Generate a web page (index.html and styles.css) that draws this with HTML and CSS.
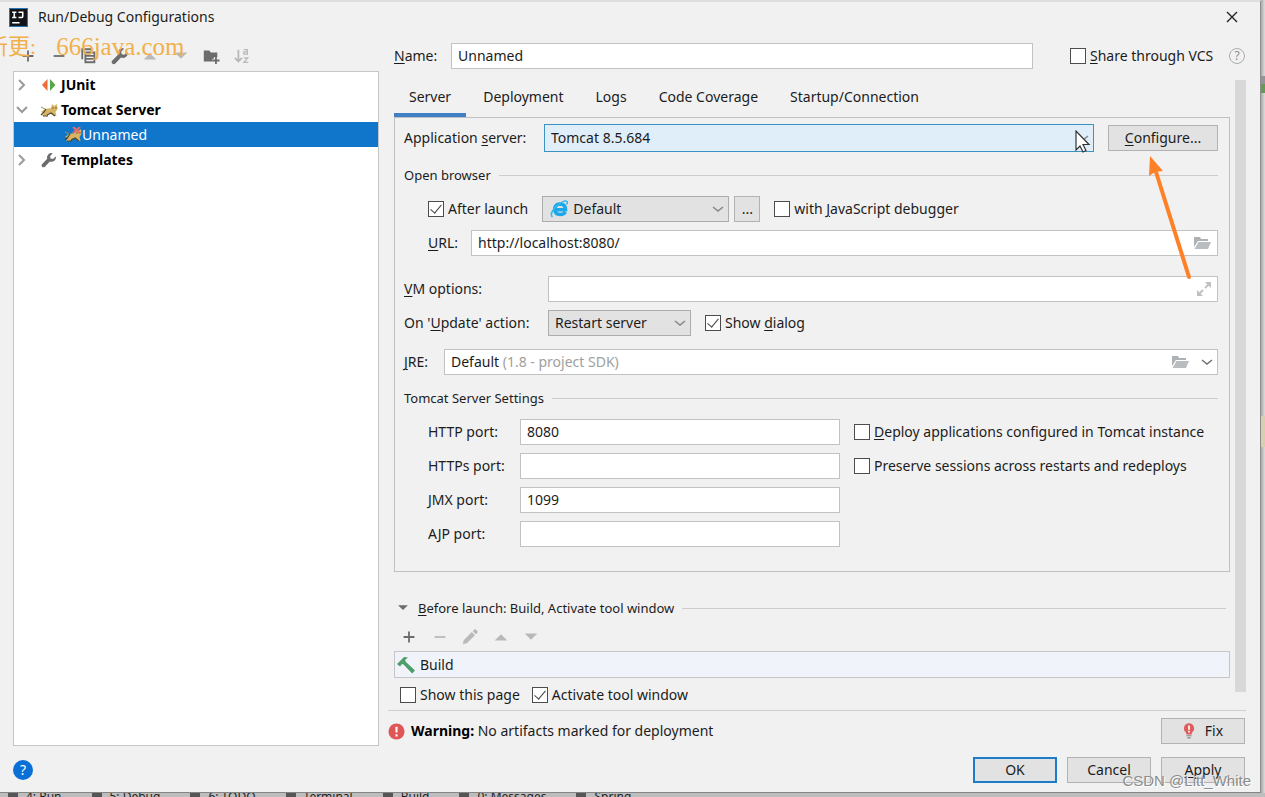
FILE: index.html
```html
<!DOCTYPE html>
<html lang="en">
<head>
<meta charset="utf-8">
<title>Run/Debug Configurations</title>
<link rel="stylesheet" href="styles.css">
</head>
<body>
<svg class="defs" aria-hidden="true">
  <symbol id="plus" viewBox="0 0 20 20"><path d="M10 4v12M4 10h12" stroke="currentColor" stroke-width="2" fill="none"/></symbol>
  <symbol id="minus" viewBox="0 0 20 20"><path d="M4 10h12" stroke="currentColor" stroke-width="2"/></symbol>
  <symbol id="up" viewBox="0 0 20 20"><path d="M3 14h14l-7-7z" fill="currentColor"/></symbol>
  <symbol id="down" viewBox="0 0 20 20"><path d="M3 6h14l-7 7z" fill="currentColor"/></symbol>
  <symbol id="wrench" viewBox="0 0 20 20"><path d="M18.500 5.500l-3.700 3.200-2.900-.6-.6-2.700 3.300-3.700a5.400 5.400 0 0 0-6.800 6.800L1.500 15a2 2 0 0 0 3.300 3.400l6.400-6.600A5.400 5.400 0 0 0 18.500 5.500z" fill="currentColor"/></symbol>
  <symbol id="right" viewBox="0 0 12 12"><path d="M3 1l5 5-5 5" stroke="currentColor" stroke-width="2" fill="none"/></symbol>
  <symbol id="chev" viewBox="0 0 12 12"><path d="M1 4l5 4 5-4" stroke="currentColor" stroke-width="1.500" fill="none"/></symbol>
  <symbol id="bigchev" viewBox="0 0 12 12"><path d="M1 3l5 5 5-5" stroke="currentColor" stroke-width="2" fill="none"/></symbol>
  <symbol id="open" viewBox="0 0 18 16"><path d="M1 2h6l1 2h7v2H5L1 12z" fill="#aeb2b5"/><path d="M5.500 7H18l-3 7H1.500z" fill="#b9bdc0"/></symbol>
  <symbol id="cat" viewBox="0 0 18 16"><path d="M1 10l4-3 6-1 1-4 2 2 3-2 .5 5-2 3 1 4h-2l-3-3-4 1-1 2H2l2-3z" fill="#d8b565"/><path d="M1 13l3-3 2-3M7 13l4-2 4 3M3 14h5" stroke="#54462b" stroke-width="1.200" fill="none"/><path d="M12.500 6h1M15.500 6h1" stroke="#222"/><path d="M1 5l4 2" stroke="#9b8d68"/></symbol>
</svg>

<div class="screen">
  <main class="dialog">
    <header class="titlebar">
      <svg class="logo" viewBox="0 0 18 18"><rect width="18" height="18" fill="#2875b8"/><rect x="1" y="1" width="16" height="16" fill="#111318"/><path d="M3 4h4M5 4v5M3 9h4M9 4h4v4q0 1-1.500 1H9M3 14h7" stroke="#fff" stroke-width="1.500" fill="none"/></svg>
      <h1>Run/Debug Configurations</h1>
      <button class="close" aria-label="Close"><svg viewBox="0 0 12 12"><path d="M1 1l10 10M11 1L1 11" stroke="#222" stroke-width="1.400"/></svg></button>
    </header>

    <div class="body">
      <aside class="side">
        <div class="tools">
          <button aria-label="Add"><svg><use href="#plus"/></svg></button>
          <button aria-label="Remove"><svg><use href="#minus"/></svg></button>
          <button aria-label="Copy"><svg viewBox="0 0 20 20"><path d="M2.500 13.500V2.500h11" stroke="currentColor" stroke-width="2" fill="none"/><rect x="5" y="5" width="12" height="13" fill="currentColor"/><path d="M7 8h8M7 11.500h8M7 15h8" stroke="#f1f1f1" stroke-width="1.500"/></svg></button>
          <button aria-label="Edit templates"><svg><use href="#wrench"/></svg></button>
          <button class="off" aria-label="Move up"><svg><use href="#up"/></svg></button>
          <button class="off" aria-label="Move down"><svg><use href="#down"/></svg></button>
          <button aria-label="New folder"><svg viewBox="0 0 20 20"><path d="M2 4h6l2 2h7v6h-4v4H2z" fill="currentColor"/><path d="M15.500 11v8M11.500 15h8" stroke="#f1f1f1" stroke-width="4"/><path d="M15.500 11v8M11.500 15h8" stroke="currentColor" stroke-width="2"/></svg></button>
          <button class="off" aria-label="Sort"><svg viewBox="0 0 20 20"><path d="M6 3v13M2 12l4 4 4-4" stroke="currentColor" stroke-width="2" fill="none"/><path d="M12 3h4v5h-4V5.500h4M12 12h4.500l-4.500 5h5" stroke="currentColor" stroke-width="1.400" fill="none"/></svg></button>
        </div>
        <ul class="tree">
          <li><svg class="twist"><use href="#right"/></svg><svg class="kind" viewBox="0 0 18 16"><path d="M7.500 2v12L2 8z" fill="#f26b32"/><path d="M10 2v12l5.500-6z" fill="#59a54b"/></svg>JUnit</li>
          <li><svg class="twist"><use href="#bigchev"/></svg><svg class="kind"><use href="#cat"/></svg>Tomcat Server</li>
          <li class="selected"><svg class="kind" viewBox="0 0 18 16"><use href="#cat" width="18" height="16"/><path d="M9 0l7 6M16 0l-7 6" stroke="#f06a62" stroke-width="2"/></svg>Unnamed</li>
          <li><svg class="twist"><use href="#right"/></svg><svg class="kind gray"><use href="#wrench"/></svg>Templates</li>
        </ul>
      </aside>

      <section class="main">
        <div class="namerow">
          <label for="name"><u>N</u>ame:</label>
          <input class="field" id="name" type="text" value="Unnamed">
          <label class="check"><input type="checkbox"><span><u>S</u>hare through VCS</span></label>
          <button class="hint" aria-label="Help on sharing">?</button>
        </div>

        <div class="scroller">
          <div class="content">
            <nav class="tabs">
              <button class="active">Server</button><button>Deployment</button><button>Logs</button><button>Code Coverage</button><button>Startup/Connection</button>
            </nav>
            <div class="panel">
              <div class="row server">
                <label for="server">Application <u>s</u>erver:</label>
                <span class="combo focus"><select id="server"><option>Tomcat 8.5.684</option></select><svg><use href="#chev"/></svg></span>
                <button class="btn configure"><span><u>C</u>onfigure...</span></button>
              </div>
              <h2 class="rule">Open browser</h2>
              <div class="row browser">
                <label class="check"><input type="checkbox" checked><span>After launch</span></label>
                <span class="combo grey ie"><svg class="ieicon" viewBox="0 0 18 18"><path d="M5 9.800H15.500Q15.500 4 10 4 4.800 4.300 4.800 9.500q.2 5 5.500 5 3.700 0 5-2.500" stroke="#1ba8ea" stroke-width="3.600" fill="none"/><path d="M2.500 17Q-1 14 6 6.500 14.500-.5 17 1.500q.7 1-.3 3" stroke="#38b6f0" stroke-width="1.600" fill="none"/></svg><select aria-label="Browser"><option>Default</option></select><svg><use href="#chev"/></svg></span>
                <button class="btn more">...</button>
                <label class="check js"><input type="checkbox"><span>with <u>J</u>avaScript debugger</span></label>
              </div>
              <div class="row url">
                <label for="url"><u>U</u>RL:</label>
                <span class="box"><input id="url" type="text" value="http://localhost:8080/"><svg class="folder"><use href="#open"/></svg></span>
              </div>
              <div class="row vm">
                <label for="vm"><u>V</u>M options:</label>
                <span class="box"><input id="vm" type="text"><svg class="expand" viewBox="0 0 16 16"><path d="M9 1h6v6zM1 9v6h6z" fill="#c0c0c0"/><path d="M9 7l4-4M7 9l-4 4" stroke="#c0c0c0" stroke-width="1.800"/></svg></span>
              </div>
              <div class="row update">
                <label for="update">On '<u>U</u>pdate' action:</label>
                <span class="combo grey"><select id="update"><option>Restart server</option></select><svg><use href="#chev"/></svg></span>
                <label class="check"><input type="checkbox" checked><span>Show <u>d</u>ialog</span></label>
              </div>
              <div class="row jre">
                <label for="jre"><u>J</u>RE:</label>
                <button class="box" id="jre" aria-haspopup="listbox"><span>Default <i>(1.8 - project SDK)</i></span><svg class="folder"><use href="#open"/></svg><svg class="chev"><use href="#chev"/></svg></button>
              </div>
              <h2 class="rule">Tomcat Server Settings</h2>
              <div class="ports">
                <label for="http">HTTP port:</label><input class="field" id="http" type="text" value="8080"><label class="check"><input type="checkbox"><span><u>D</u>eploy applications configured in Tomcat instance</span></label>
                <label for="https">HTTPs port:</label><input class="field" id="https" type="text"><label class="check"><input type="checkbox"><span>Preserve sessions across restarts and redeploys</span></label>
                <label for="jmx">JMX port:</label><input class="field" id="jmx" type="text" value="1099"><span></span>
                <label for="ajp">AJP port:</label><input class="field" id="ajp" type="text"><span></span>
              </div>
            </div>

            <h2 class="rule before"><svg class="fold"><use href="#down"/></svg><span><u>B</u>efore launch: Build, Activate tool window</span></h2>
            <div class="tools tasks">
              <button aria-label="Add task"><svg><use href="#plus"/></svg></button>
              <button class="off" aria-label="Remove task"><svg><use href="#minus"/></svg></button>
              <button class="off" aria-label="Edit task"><svg viewBox="0 0 20 20"><path d="M2 18l1-4.500L12 4.500l3.500 3.500-9 9zM13 3.500L15 1.500q1-.5 2 .5l1 1q1 1 .3 2L16.500 7z" fill="currentColor"/></svg></button>
              <button class="off" aria-label="Task up"><svg><use href="#up"/></svg></button>
              <button class="off" aria-label="Task down"><svg><use href="#down"/></svg></button>
            </div>
            <div class="tasklist"><svg viewBox="0 0 18 18"><path d="M0 8L7 1l4 .5-3 2.500 1 2 9 8.500-2.800 3L6.500 8.500 5 8 3 10.500z" fill="#4d9e68"/></svg>Build</div>
            <div class="row checks">
              <label class="check"><input type="checkbox"><span>Show this page</span></label>
              <label class="check"><input type="checkbox" checked><span>Activate tool window</span></label>
            </div>
          </div>
          <div class="thumb"></div>
        </div>

        <div class="warning">
          <svg viewBox="0 0 18 18"><circle cx="9" cy="9" r="8.500" fill="#e05555"/><path d="M9 4v6M9 12v2.200" stroke="#fff" stroke-width="2.200"/></svg>
          <p><b>Warning:</b> No artifacts marked for deployment</p>
          <button class="btn wide"><svg viewBox="0 0 14 18"><path d="M7 0a6 6 0 0 0-3.500 10.800L4 13h6l.5-2.200A6 6 0 0 0 7 0z" fill="#e05b5b"/><path d="M7 2.500v5M7 8.800v2" stroke="#fff" stroke-width="2"/><path d="M4 14.500h6M5 17h4" stroke="#888" stroke-width="1.300"/></svg>Fix</button>
        </div>
      </section>
    </div>

    <footer class="actions">
      <button class="help" aria-label="Help">?</button>
      <button class="btn wide ok">OK</button>
      <button class="btn wide">Cancel</button>
      <button class="btn wide"><span><u>A</u>pply</span></button>
    </footer>
  </main>

  <div class="edge"><i class="mark slate"></i><i class="mark green"></i><i class="mark sand"></i></div>
  <div class="dock">
    <span><i></i>4: Run</span><span><i></i>5: Debug</span><span><i></i>6: TODO</span><span><i></i>Terminal</span><span><i></i>Build</span><span><i></i>0: Messages</span><span><i></i>Spring</span>
  </div>

  <div class="stamp"><span class="cjk">新更:</span><span>666java.com</span></div>
  <div class="credit">CSDN @Litt_White</div>
  <svg class="arrow" viewBox="0 0 50 130"><path d="M44 122L11 17" stroke="#ff8127" stroke-width="4" stroke-linecap="round"/><path d="M5 1L18 16l-8 1-6 4z" fill="#ff8127"/></svg>
  <svg class="cursor" viewBox="0 0 16 24"><path d="M1 1v19l4-4 3 6 3-1.500-3-6h6z" fill="#fff" stroke="#333" stroke-width="1.200"/></svg>
</div>
</body>
</html>
```
FILE: styles.css
```css
* { box-sizing: border-box; }
body, h1, h2, p, ul { margin: 0; padding: 0; }
body { font: 14px/20px "Noto Sans", "Open Sans", sans-serif; color: #1c1c1c; background: #f1f1f1; }
button, input, select { font: inherit; color: inherit; margin: 0; }
button { padding: 0; border: 0; background: none; }
i { font-style: normal; }
u { text-underline-offset: 2px; }
svg { flex: none; display: block; }
.defs { position: absolute; width: 0; height: 0; }

.screen { position: relative; display: grid; grid-template-columns: minmax(0, 1fr) 4px; grid-template-rows: 1fr 4px; min-height: 100vh; overflow: hidden; }
.dialog { display: flex; flex-direction: column; background: #f1f1f1; border-top: 2px solid #dedede; border-right: 1px solid #8c8c8c; border-bottom: 1px solid #858585; }

.titlebar { display: flex; align-items: center; gap: 10px; height: 32px; padding: 0 22px 2px 9px; }
.logo { width: 19px; height: 19px; }
h1 { flex: 1; font-size: 14px; font-weight: 400; }
.close svg { width: 12px; height: 12px; }

.body { flex: 1; display: flex; gap: 9px; padding: 0 14px 0 13px; }
.side { flex: 0 0 366px; display: flex; flex-direction: column; margin-bottom: 6px; }
.tools { display: flex; justify-content: space-between; align-items: center; color: #6c6c6c; }
.tools svg { width: 18px; height: 18px; }
.tools .off { color: #b9b9b9; }
.side .tools { width: 238px; height: 37px; padding: 6px 0 0 6px; }
.tree { flex: 1; list-style: none; background: #fff; border: 1px solid #c6c6c6; font-weight: 700; color: #000; }
.tree li { display: flex; align-items: center; height: 25px; padding-left: 2px; }
.twist { width: 12px; height: 12px; margin-right: 12px; color: #9a9a9a; }
.kind { width: 18px; height: 16px; margin-right: 3px; }
.gray { color: #6c6c6c; }
.tree .selected { padding-left: 50px; background: #0f76cb; color: #fff; font-weight: 400; }
.selected .kind { margin-right: 0; }

.main { flex: 1; min-width: 0; display: flex; flex-direction: column; }
.field, .box { height: 26px; border: 1px solid #c2c2c2; background: #fff; border-radius: 0; min-width: 0; }
.field { padding: 0 6px 2px; }
.namerow { display: flex; align-items: center; height: 46px; padding: 0 1px 2px 6px; }
.namerow > label:first-child { width: 45px; }
.namerow .field { flex: 1; margin: 0 37px 0 12px; }
.check { display: flex; align-items: center; gap: 4px; white-space: nowrap; }
.check input { appearance: none; position: relative; width: 16px; height: 16px; border: 1px solid #4c4c4c; background: #fff; }
.check input:checked::after { content: ""; position: absolute; left: 4px; top: 0; width: 5px; height: 10px; border: solid #444; border-width: 0 1px 1px 0; transform: rotate(40deg); }
.namerow .check { width: 150px; }
.hint { width: 16px; height: 16px; margin-left: 9px; border: 1px solid #a9adb2; border-radius: 50%; color: #8a8e93; font-size: 12px; line-height: 14px; }

.scroller { display: flex; justify-content: space-between; border-bottom: 1px solid #cfcfcf; padding-bottom: 18px; }
.content { flex: 1; min-width: 0; padding: 0 5px 0 6px; margin-bottom: -20px; }
.thumb { width: 11px; background: #d8d8d8; }
.tabs { display: flex; height: 37px; gap: 2px; }
.tabs button { padding: 0 15px; border-bottom: 4px solid transparent; }
.tabs .active { border-color: #417fc4; }
.panel { border: 1px solid #c0c0c0; padding: 6px 11px 24px 9px; }
.row { display: flex; align-items: center; }
.row > label { white-space: nowrap; }
.rule { display: flex; align-items: center; gap: 8px; font-size: 13px; font-weight: 400; height: 20px; }
.rule::after { content: ""; flex: 1; height: 1px; background: #cdcdcd; }

.combo { position: relative; display: flex; align-items: center; height: 26px; border: 1px solid #adadad; }
.combo select { appearance: none; flex: 1; min-width: 0; height: 100%; border: 0; border-radius: 0; background: none; padding: 0 6px; }
.combo svg { width: 12px; height: 12px; margin-right: 4px; color: #858585; }
.grey { background: #e2e2e2; }
.focus { height: 28px; border: 1px solid #3f92c4; background: #dfeef9; }
.server { gap: 12px; }
.server label { flex: none; width: 128px; }
.update > label:first-child, .vm label { flex: none; width: 144px; }
.server .combo { flex: 1; }
.btn { display: flex; align-items: center; justify-content: center; height: 26px; border: 1px solid #b2b2b2; background: #e2e2e2; }
.configure { width: 110px; margin-left: 2px; }
.panel .rule { margin: 13px 0 11px; }
.browser { padding-left: 24px; }
.browser .combo { width: 187px; margin: 0 5px 0 14px; }
.combo .ieicon { width: 18px; height: 18px; margin: 0 0 0 7px; }
.ie select { padding-left: 5px; }
.more { width: 26px; }
.js { margin-left: 14px; }
.url { margin-top: 8px; padding-left: 24px; gap: 13px; }
.box { flex: 1; display: flex; align-items: center; text-align: left; }
.box input, .box span { flex: 1; min-width: 0; height: 100%; border: 0; padding: 0 6px; background: none; line-height: 24px; }
.box input { padding-bottom: 2px; line-height: 20px; }
.folder { width: 18px; height: 16px; margin-right: 6px; }
.expand { width: 16px; height: 16px; margin-right: 5px; }
.vm { margin-top: 20px; }
.update { margin-top: 8px; }
.update .combo { width: 143px; margin-right: 14px; }
.jre { margin-top: 13px; gap: 12px; }
.jre label { width: 28px; }
.jre i { color: #a0a0a0; }
.chev { width: 12px; height: 12px; margin: 0 4px 0 6px; color: #6f6f6f; }
.ports { display: grid; grid-template-columns: 80px minmax(0, 320px) auto; gap: 8px 12px; align-items: center; padding-left: 24px; margin-right: -4px; }
.ports .check { margin-left: 2px; }

.before { margin-top: 26px; padding-right: 4px; }
.fold { width: 14px; height: 14px; margin: 0 -6px 0 2px; color: #6c6c6c; }
.before span { margin-left: 6px; }
.tasks { width: 140px; height: 28px; margin: 5px 0 0 6px; }
.tasklist { display: flex; align-items: center; gap: 5px; height: 27px; border: 1px solid #c6c6c6; background: #f0f4fa; padding-left: 2px; }
.tasklist svg { width: 18px; height: 18px; }
.checks { gap: 12px; height: 34px; padding-left: 6px; }

.warning { display: flex; align-items: center; gap: 6px; height: 40px; }
.warning > svg { width: 17px; height: 17px; }
.warning p { flex: 1; }
.warning b { font-weight: 700; color: #000; }
.wide { width: 84px; gap: 10px; }
.wide svg { width: 12px; height: 16px; }
.warning .wide { margin-right: 1px; }

.actions { display: flex; align-items: center; gap: 10px; height: 40px; padding: 0 15px 5px 13px; }
.help { width: 20px; height: 20px; margin-right: auto; border-radius: 50%; background: #0a6fd6; color: #fff; }
.ok { border: 2px solid #1c7cc9; }

.edge { position: relative; background: linear-gradient(90deg, #aaa, #dcdcdc); }
.mark { position: absolute; left: 0; width: 4px; }
.slate { top: 76px; height: 8px; background: #929499; }
.green { top: 84px; height: 9px; background: #639a55; }
.sand { top: 416px; height: 31px; background: #d8cfae; }
.dock { grid-column: 1 / -1; display: flex; gap: 30px; padding-left: 8px; height: 4px; overflow: hidden; background: #bdbdbd; font-size: 12px; line-height: 8px; }
.dock span { display: flex; gap: 8px; }
.dock span i { width: 10px; height: 4px; background: #555; }

.stamp { position: absolute; left: -14px; top: 34px; display: flex; align-items: center; gap: 20px; font: 25px/26px "Liberation Serif", "Noto Sans CJK SC", serif; color: #f2b04a; pointer-events: none; }
.cjk { font-size: 22px; }
.credit { position: absolute; right: 14px; bottom: 7px; font: 15px/18px "Liberation Sans", sans-serif; color: #8d8d8d; text-shadow: 1px 1px #fff; pointer-events: none; }
.arrow { position: absolute; left: 1145px; top: 155px; width: 50px; height: 130px; pointer-events: none; }
.cursor { position: absolute; left: 1075px; top: 130px; width: 16px; height: 24px; pointer-events: none; }
```
